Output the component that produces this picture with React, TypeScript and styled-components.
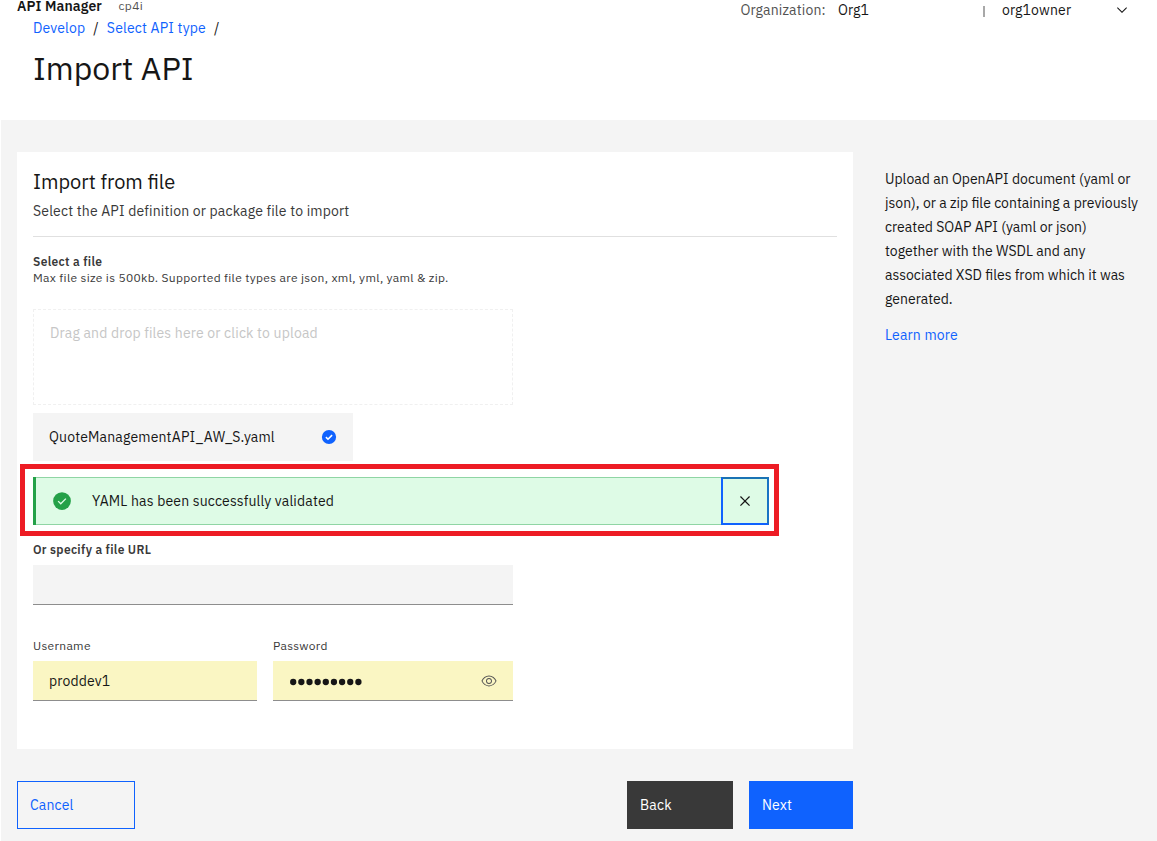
import React from "react";
import styled, { createGlobalStyle } from "styled-components";

const GlobalStyle = createGlobalStyle`
  * { box-sizing: border-box; }
  body {
    margin: 0;
    background: #fff;
    color: #161616;
    font-family: "IBM Plex Sans", Roboto, "Liberation Sans", sans-serif;
    font-size: 14px;
    line-height: 18px;
    letter-spacing: 0.16px;
    overflow: hidden;
  }
  h1, h2, p { margin: 0; font-weight: 400; }
  a { color: #0f62fe; text-decoration: none; }
`;

const Page = styled.div`
  display: flex;
  flex-direction: column;
  height: 841px;
  overflow: hidden;
`;

const TopBar = styled.header`
  display: flex;
  height: 19px;
  line-height: 13px;
  padding-left: 17px;
  white-space: nowrap;
`;

const Brand = styled.strong`
  width: 101.5px;
  font-weight: 600;
  letter-spacing: 0.1px;
`;

const Instance = styled.span`
  flex: 1;
  font-size: 12px;
  line-height: 12px;
  color: #525252;
  letter-spacing: 0.32px;
`;

const Account = styled.div`
  display: flex;
  width: 416.5px;
  line-height: 21px;
`;

const OrgLabel = styled.span`
  width: 97.5px;
  color: #525252;
`;

const OrgName = styled.span`
  width: 145px;
`;

const Separator = styled.i`
  width: 2px;
  height: 11px;
  margin: 6px 17px 0 0;
  background: #a8a8a8;
`;

const Owner = styled.span`
  width: 112px;
`;

const Chevron = styled.svg`
  width: 16px;
  height: 16px;
  margin-top: 2px;
`;

const PageHead = styled.div`
  height: 101px;
  padding-left: 33px;
`;

const Breadcrumbs = styled.nav`
  display: flex;
  gap: 8px;
`;

const PageTitle = styled.h1`
  margin-top: 11px;
  font-size: 32px;
  line-height: 40px;
  letter-spacing: 0;
`;

const Body = styled.main`
  flex: 1;
  display: flex;
  gap: 32px;
  margin-left: 1px;
  padding: 32px 16px 0;
  background: #f4f4f4;
`;

const MainColumn = styled.div`
  flex: none;
  width: 836px;
`;

const Card = styled.section`
  height: 597px;
  padding: 16px;
  background: #fff;
`;

const CardTitle = styled.h2`
  font-size: 20px;
  line-height: 28px;
  letter-spacing: 0;
`;

const CardSubtitle = styled.p`
  margin-top: 6px;
  padding-bottom: 16px;
  border-bottom: 1px solid #e0e0e0;
  color: #393939;
`;

const FieldLabel = styled.label<{ $strong?: boolean }>`
  display: block;
  font-size: 12px;
  line-height: 16px;
  font-weight: ${(p) => (p.$strong ? 600 : 400)};
  letter-spacing: 0.32px;
  color: #393939;
`;

const Hint = styled.p`
  font-size: 12px;
  line-height: 16px;
  letter-spacing: 0.32px;
  color: #393939;
`;

const FileField = styled.div`
  margin-top: 17px;
`;

const DropZone = styled.div`
  width: 480px;
  height: 96px;
  margin-top: 23px;
  padding: 14px 16px;
  border: 1px dashed #f0f0f0;
  color: #c6c6c6;
`;

const FileRow = styled.div`
  display: flex;
  align-items: center;
  justify-content: space-between;
  width: 320px;
  height: 48px;
  margin-top: 8px;
  padding: 0 16px;
  background: #f4f4f4;
`;

const Notification = styled.div`
  position: relative;
  display: flex;
  align-items: center;
  width: 736px;
  height: 48px;
  margin-top: 16px;
  padding-left: 16px;
  border-left: 3px solid #24a148;
  background: #defbe6;
  box-shadow: inset 0 1px #8fd5a4, inset 0 -1px #8fd5a4;
`;

const Highlight = styled.div`
  position: absolute;
  inset: -13px -10px -11px -16px;
  border: 5px solid #ed1c24;
  pointer-events: none;
`;

const NoticeText = styled.span`
  flex: 1;
  margin-left: 20px;
`;

const CloseButton = styled.button`
  display: flex;
  align-items: center;
  justify-content: center;
  width: 48px;
  height: 48px;
  padding: 0;
  border: 2px solid #0f62fe;
  border-top-color: #1a73b4;
  border-right-color: #1a73c4;
  background: transparent;
`;

const UrlField = styled.div`
  width: 480px;
  margin-top: 17px;
`;

const Credentials = styled.div`
  display: grid;
  grid-template-columns: 224px 240px;
  gap: 16px;
  margin-top: 33px;
`;

const InputBox = styled.div<{ $filled?: boolean }>`
  display: flex;
  align-items: center;
  justify-content: space-between;
  height: 40px;
  margin-top: 7px;
  padding: 0 16px;
  border-bottom: 1px solid #8d8d8d;
  background: ${(p) => (p.$filled ? "#faf6c3" : "#f4f4f4")};
`;

const Dots = styled.svg`
  width: 74px;
  height: 8px;
  margin-top: 3px;
`;

const Actions = styled.div`
  display: flex;
  gap: 16px;
  margin-top: 32px;
`;

const Button = styled.button<{ $kind: "ghost" | "dark" | "primary" }>`
  width: ${(p) => ({ ghost: 118, dark: 106, primary: 104 })[p.$kind]}px;
  height: 48px;
  padding: 0 12px;
  margin-right: ${(p) => (p.$kind === "ghost" ? "auto" : "0")};
  border: 1px solid ${(p) => (p.$kind === "dark" ? "#393939" : "#0f62fe")};
  background: ${(p) => ({ ghost: "transparent", dark: "#393939", primary: "#0f62fe" })[p.$kind]};
  color: ${(p) => (p.$kind === "ghost" ? "#0f62fe" : "#fff")};
  font: inherit;
  letter-spacing: inherit;
  text-align: left;
`;

const Aside = styled.aside`
  padding-top: 15px;
  line-height: 24px;
  white-space: nowrap;
  p { letter-spacing: 0; }
  a { display: block; margin-top: 12px; }
`;

const HELP_LINES = [
  "Upload an OpenAPI document (yaml or",
  "json), or a zip file containing a previously",
  "created SOAP API (yaml or json)",
  "together with the WSDL and any",
  "associated XSD files from which it was",
  "generated.",
];

const CheckBadge = ({ size, color, tick }: { size: number; color: string; tick: string }) => (
  <svg width={size} height={size} viewBox="0 0 16 16">
    <circle cx="8" cy="8" r="7.1" fill={color} />
    <path d="M4.9 8.1 7 10.2l4.1-4.1" fill="none" stroke={tick} strokeWidth={size > 16 ? 1.1 : 1.6} />
  </svg>
);

const EyeIcon = () => (
  <svg width="16" height="16" viewBox="0 0 16 16" fill="#525252">
    <path d="M15.5 7.8C14.3 4.7 11.3 2.6 8 2.5 4.7 2.6 1.7 4.7.5 7.8c0 .1 0 .2 0 .3 1.200 3.100 4.100 5.200 7.500 5.300 3.300-.1 6.300-2.200 7.500-5.300 0-.1 0-.2 0-.3zM8 12.500c-2.700 0-5.400-2-6.500-4.500 1-2.500 3.800-4.500 6.500-4.500s5.400 2 6.500 4.500c-1 2.500-3.800 4.500-6.500 4.500z" />
    <path d="M8 5C6.300 5 5 6.300 5 8s1.300 3 3 3 3-1.300 3-3-1.300-3-3-3zm0 5c-1.100 0-2-.9-2-2s.9-2 2-2 2 .9 2 2-.9 2-2 2z" />
  </svg>
);

export default function App() {
  return (
    <Page>
      <GlobalStyle />
      <TopBar>
        <Brand>API Manager</Brand>
        <Instance>cp4i</Instance>
        <Account>
          <OrgLabel>Organization:</OrgLabel>
          <OrgName>Org1</OrgName>
          <Separator />
          <Owner>org1owner</Owner>
          <Chevron viewBox="0 0 16 16">
            <path d="M8 11 3 6l.7-.7L8 9.600l4.300-4.300L13 6z" fill="#161616" />
          </Chevron>
        </Account>
      </TopBar>
      <PageHead>
        <Breadcrumbs>
          <a>Develop</a>
          <span>/</span>
          <a>Select API type</a>
          <span>/</span>
        </Breadcrumbs>
        <PageTitle>Import API</PageTitle>
      </PageHead>
      <Body>
        <MainColumn>
          <Card>
            <CardTitle>Import from file</CardTitle>
            <CardSubtitle>Select the API definition or package file to import</CardSubtitle>
            <FileField>
              <FieldLabel $strong>Select a file</FieldLabel>
              <Hint>Max file size is 500kb. Supported file types are json, xml, yml, yaml &amp; zip.</Hint>
              <DropZone>Drag and drop files here or click to upload</DropZone>
              <FileRow>
                <span>QuoteManagementAPI_AW_S.yaml</span>
                <CheckBadge size={16} color="#0f62fe" tick="#fff" />
              </FileRow>
            </FileField>
            <Notification>
              <CheckBadge size={20} color="#24a148" tick="#defbe6" />
              <NoticeText>YAML has been successfully validated</NoticeText>
              <CloseButton aria-label="Close">
                <svg width="20" height="20" viewBox="0 0 32 32">
                  <path d="M24 9.400 22.600 8 16 14.600 9.400 8 8 9.400l6.600 6.600L8 22.600 9.400 24l6.600-6.600 6.600 6.600 1.400-1.400-6.600-6.600z" fill="#161616" />
                </svg>
              </CloseButton>
              <Highlight />
            </Notification>
            <UrlField>
              <FieldLabel $strong>Or specify a file URL</FieldLabel>
              <InputBox />
            </UrlField>
            <Credentials>
              <div>
                <FieldLabel>Username</FieldLabel>
                <InputBox $filled>proddev1</InputBox>
              </div>
              <div>
                <FieldLabel>Password</FieldLabel>
                <InputBox $filled>
                  <Dots viewBox="0 0 74 8">
                    {Array.from({ length: 9 }, (_, i) => (
                      <circle key={i} cx={4.200 + i * 8.150} cy="4" r="3.150" fill="#161616" />
                    ))}
                  </Dots>
                  <EyeIcon />
                </InputBox>
              </div>
            </Credentials>
          </Card>
          <Actions>
            <Button $kind="ghost">Cancel</Button>
            <Button $kind="dark">Back</Button>
            <Button $kind="primary">Next</Button>
          </Actions>
        </MainColumn>
        <Aside>
          {HELP_LINES.map((line) => (
            <p key={line}>{line}</p>
          ))}
          <a>Learn more</a>
        </Aside>
      </Body>
    </Page>
  );
}
